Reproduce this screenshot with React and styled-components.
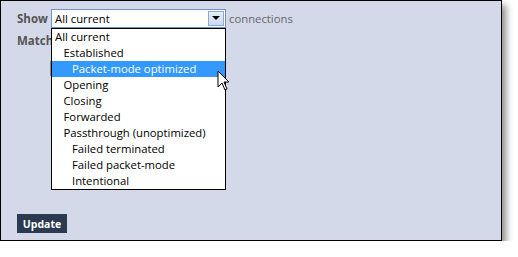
import styled, { createGlobalStyle } from 'styled-components'

const GlobalStyle = createGlobalStyle`
    body {
        margin: 0;
        background: #fff;
        font-family: "Open Sans", "Liberation Sans", sans-serif;
    }
`

const Panel = styled.div`
    position: relative;
    width: 502px;
    height: 241px;
    box-sizing: border-box;
    background: #d4d9ea;
    border: 1px solid #000;
    box-shadow: 4px 5px 7px rgba(0, 0, 0, 0.45);
    padding: 7px 0 0 16px;
    display: flex;
    flex-direction: column;
`

const Row = styled.div`
    display: flex;
    align-items: center;
    height: ${p => p.h || 20}px;
`

const Label = styled.span`
    font-weight: bold;
    font-size: 11.5px;
    color: #555;
    width: 34px;
`

const SelectBox = styled.div`
    position: relative;
    width: 175px;
    height: 19px;
    box-sizing: border-box;
    border: 1px solid #6f93c9;
    background: #fff;
    display: flex;
    align-items: center;
    padding-left: 3px;
    font-size: 11.3px;
    color: #000;
`

const DropButton = styled.div`
    margin-left: auto;
    margin-right: 1px;
    width: 16px;
    height: 15px;
    box-sizing: border-box;
    border: 1px solid #8aa8d2;
    background: linear-gradient(#e6eff9, #ccdcf0);
    display: flex;
    align-items: center;
    justify-content: center;
`

const Arrow = styled.span`
    width: 0;
    height: 0;
    border-left: 4px solid transparent;
    border-right: 4px solid transparent;
    border-top: 4px solid #000;
`

const After = styled.span`
    font-size: 11.3px;
    color: #666;
    margin-left: 3px;
`

const List = styled.ul`
    position: absolute;
    top: 18px;
    left: -1px;
    width: 175px;
    margin: 0;
    padding: 0;
    list-style: none;
    background: #fff;
    border: 1px solid #000;
    box-sizing: border-box;
    z-index: 2;
`

const Item = styled.li`
    height: 16px;
    line-height: 16px;
    font-size: 11.3px;
    padding-left: ${p => 3 + p.level * 8.5}px;
    background: ${p => (p.active ? '#3399ff' : 'transparent')};
    color: ${p => (p.active ? '#fff' : '#000')};
    white-space: nowrap;
`

const HiddenInput = styled.div`
    width: 2px;
    height: 15px;
    margin: 8px 0 0 33px;
    background: #888;
`

const UpdateButton = styled.button`
    margin-top: auto;
    margin-bottom: 7px;
    align-self: flex-start;
    background: #2a3a4f;
    color: #fff;
    border: none;
    font-family: inherit;
    font-weight: bold;
    font-size: 10.5px;
    height: 19px;
    width: 50px;
    padding: 0;
`

const Cursor = styled.svg`
    position: absolute;
    left: 216px;
    top: 69px;
    z-index: 3;
`

const options = [
    ['All current', 0],
    ['Established', 1],
    ['Packet-mode optimized', 2],
    ['Opening', 1],
    ['Closing', 1],
    ['Forwarded', 1],
    ['Passthrough (unoptimized)', 1],
    ['Failed terminated', 2],
    ['Failed packet-mode', 2],
    ['Intentional', 2],
]

const App = () => {
    return (
        <>
            <GlobalStyle />
            <Panel>
                <Row>
                    <Label>Show</Label>
                    <SelectBox>
                        All current
                        <DropButton><Arrow /></DropButton>
                        <List>
                            {options.map(([text, level], i) => (
                                <Item key={text} level={level} active={i === 2}>{text}</Item>
                            ))}
                        </List>
                    </SelectBox>
                    <After>connections</After>
                </Row>
                <Row h={25}>
                    <Label>Match</Label>
                </Row>
                <HiddenInput />
                <UpdateButton>Update</UpdateButton>
                <Cursor width="14" height="22" viewBox="0 0 14 22">
                    <path d="M1 1 L1 17 L5 13 L8 20 L10 19 L7 12 L12 12 Z" fill="#fff" stroke="#000" strokeWidth="1" strokeLinejoin="round" />
                </Cursor>
            </Panel>
        </>
    )
}

export default App
